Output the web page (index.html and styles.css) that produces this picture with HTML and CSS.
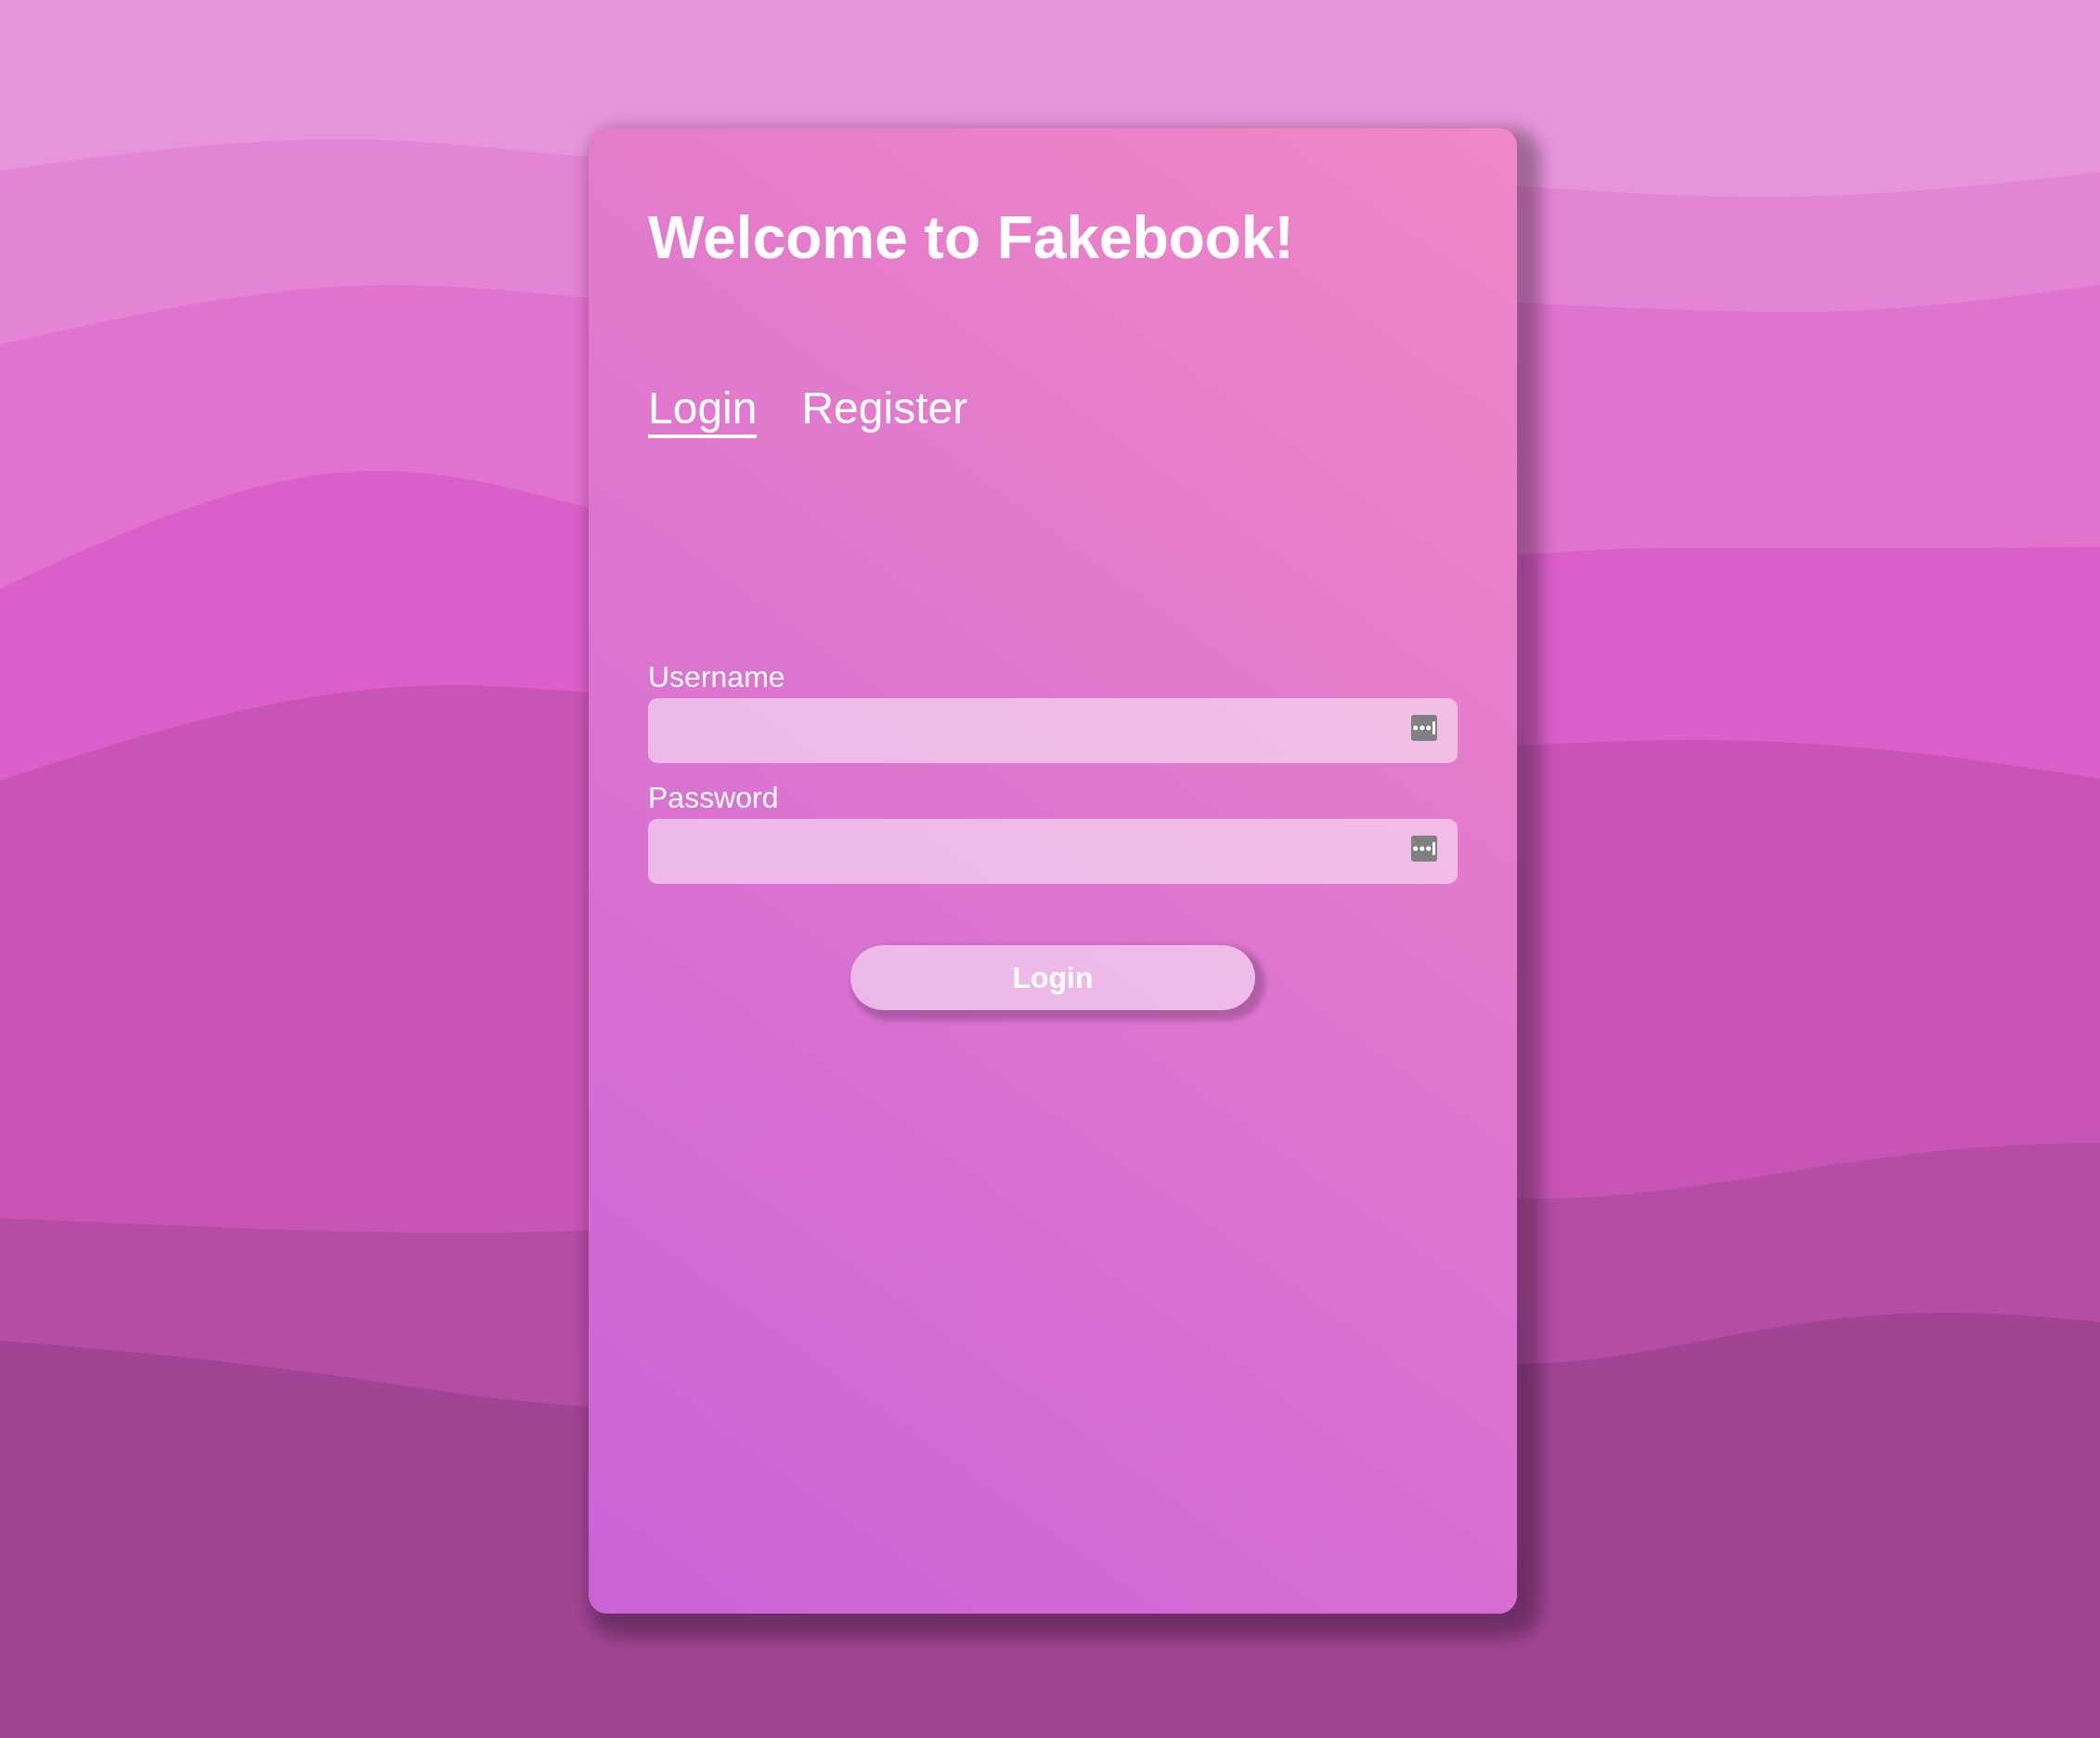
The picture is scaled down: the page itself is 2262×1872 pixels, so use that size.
FILE: index.html
```html
<!DOCTYPE html>
<html lang="en">
<head>
  <meta charset="utf-8">
  <meta name="viewport" content="width=device-width, initial-scale=1">
  <title>Fakebook</title>
  <link rel="stylesheet" href="styles.css">
</head>
<body>
  <svg class="waves" viewBox="0 0 2262 1872" preserveAspectRatio="none" aria-hidden="true">
    <path class="wave-1" d="M0 184C122 166 245 150 367 150C456 150 545 161 634 169L1634 200C1725 207 1816 212 1908 212C2026 212 2144 199 2262 185V1872H0Z"/>
    <path class="wave-2" d="M0 371C140 340 280 307 420 307C491 307 563 314 634 321L1634 326C1736 331 1838 336 1940 336C2047 336 2154 321 2262 307V1872H0Z"/>
    <path class="wave-3" d="M0 634C136 571 272 507 408 507C483 507 558 527 634 547L1634 598C1690 594 1740 590 1830 590C1974 590 2118 591 2262 589V1872H0Z"/>
    <path class="wave-4" d="M0 841C162 787 324 738 486 738C535 738 585 742 634 746L1634 803C1698 800 1762 797 1826 797C1971 797 2116 815 2262 839V1872H0Z"/>
    <path class="wave-5" d="M0 1312C168 1319 336 1328 505 1328C548 1328 591 1327 634 1325L1655 1291C1850 1291 2000 1231 2262 1231V1872H0Z"/>
    <path class="wave-6" d="M0 1444C140 1455 280 1469 420 1490C491 1501 563 1511 634 1515L1634 1469C1786 1469 1900 1414 2094 1414C2150 1414 2206 1418 2262 1424V1872H0Z"/>
  </svg>

  <main class="card">
    <h1 class="title">Welcome to Fakebook!</h1>
    <nav class="tabs">
      <button class="tab tab-active" type="button">Login</button>
      <button class="tab" type="button">Register</button>
    </nav>
    <form class="form">
      <div class="field">
        <label class="label" for="username">Username</label>
        <div class="control">
          <input class="input" id="username" name="username" type="text">
          <svg class="autofill" viewBox="0 0 28 28" aria-hidden="true">
            <rect width="28" height="28" rx="3" fill="#808080"/>
            <g fill="#fff">
              <circle cx="4.7" cy="14" r="2.5"/>
              <circle cx="11.7" cy="14" r="2.5"/>
              <circle cx="18.7" cy="14" r="2.5"/>
              <rect x="23" y="7" width="3" height="14" rx="1"/>
            </g>
          </svg>
        </div>
      </div>
      <div class="field">
        <label class="label" for="password">Password</label>
        <div class="control">
          <input class="input" id="password" name="password" type="password">
          <svg class="autofill" viewBox="0 0 28 28" aria-hidden="true">
            <rect width="28" height="28" rx="3" fill="#808080"/>
            <g fill="#fff">
              <circle cx="4.7" cy="14" r="2.5"/>
              <circle cx="11.7" cy="14" r="2.5"/>
              <circle cx="18.7" cy="14" r="2.5"/>
              <rect x="23" y="7" width="3" height="14" rx="1"/>
            </g>
          </svg>
        </div>
      </div>
      <button class="submit" type="submit">Login</button>
    </form>
  </main>
</body>
</html>
```

FILE: styles.css
```css
* {
  box-sizing: border-box;
}

body {
  margin: 0;
  min-height: 100vh;
  padding: 4px 0 0 6px;
  display: flex;
  align-items: center;
  justify-content: center;
  background: #e695da;
  color: #fff;
  font-family: "Liberation Sans", Helvetica, Arial, sans-serif;
}

.waves {
  position: fixed;
  inset: 0;
  width: 100%;
  height: 100%;
  z-index: -1;
}

.wave-1 { fill: #e384d5; }
.wave-2 { fill: #e073ce; }
.wave-3 { fill: #db5fca; }
.wave-4 { fill: #c855b5; }
.wave-5 { fill: #b54da5; }
.wave-6 { fill: #a14494; }

.card {
  width: 100%;
  max-width: 1000px;
  min-height: 1600px;
  padding: 80px 64px 64px;
  border-radius: 20px;
  background: linear-gradient(36deg, #ca63d8, #f087c6);
  box-shadow: 13px 13px 18px 13px rgba(0, 0, 0, 0.3);
}

.title {
  margin: 0;
  font-size: 64px;
  line-height: 76px;
}

.tabs {
  display: flex;
  gap: 48px;
  margin-top: 118px;
}

.tab {
  padding: 0;
  border: 0;
  border-bottom: 4px solid transparent;
  background: none;
  color: inherit;
  font: 48px/56px "Liberation Sans", Helvetica, Arial, sans-serif;
  cursor: pointer;
}

.tab-active {
  border-bottom-color: #fff;
}

.form {
  display: flex;
  flex-direction: column;
  gap: 19px;
  margin-top: 239px;
}

.field {
  display: flex;
  flex-direction: column;
  gap: 5px;
}

.label {
  font-size: 32px;
  line-height: 36px;
}

.control {
  position: relative;
  display: flex;
}

.input {
  width: 100%;
  height: 70px;
  padding: 0 64px 0 16px;
  border: 0;
  border-radius: 10px;
  background: rgba(255, 255, 255, 0.5);
  color: #fff;
  font: 32px/36px "Liberation Sans", Helvetica, Arial, sans-serif;
}

.autofill {
  position: absolute;
  top: 18px;
  right: 22px;
  width: 28px;
  height: 28px;
}

.submit {
  align-self: center;
  width: 50%;
  height: 70px;
  margin-top: 47px;
  padding: 0;
  border: 0;
  border-radius: 35px;
  background: rgba(255, 255, 255, 0.5);
  box-shadow: 6px 6px 6px 5px rgba(0, 0, 0, 0.2);
  color: #fff;
  font: bold 32px/36px "Liberation Sans", Helvetica, Arial, sans-serif;
  cursor: pointer;
}
```
